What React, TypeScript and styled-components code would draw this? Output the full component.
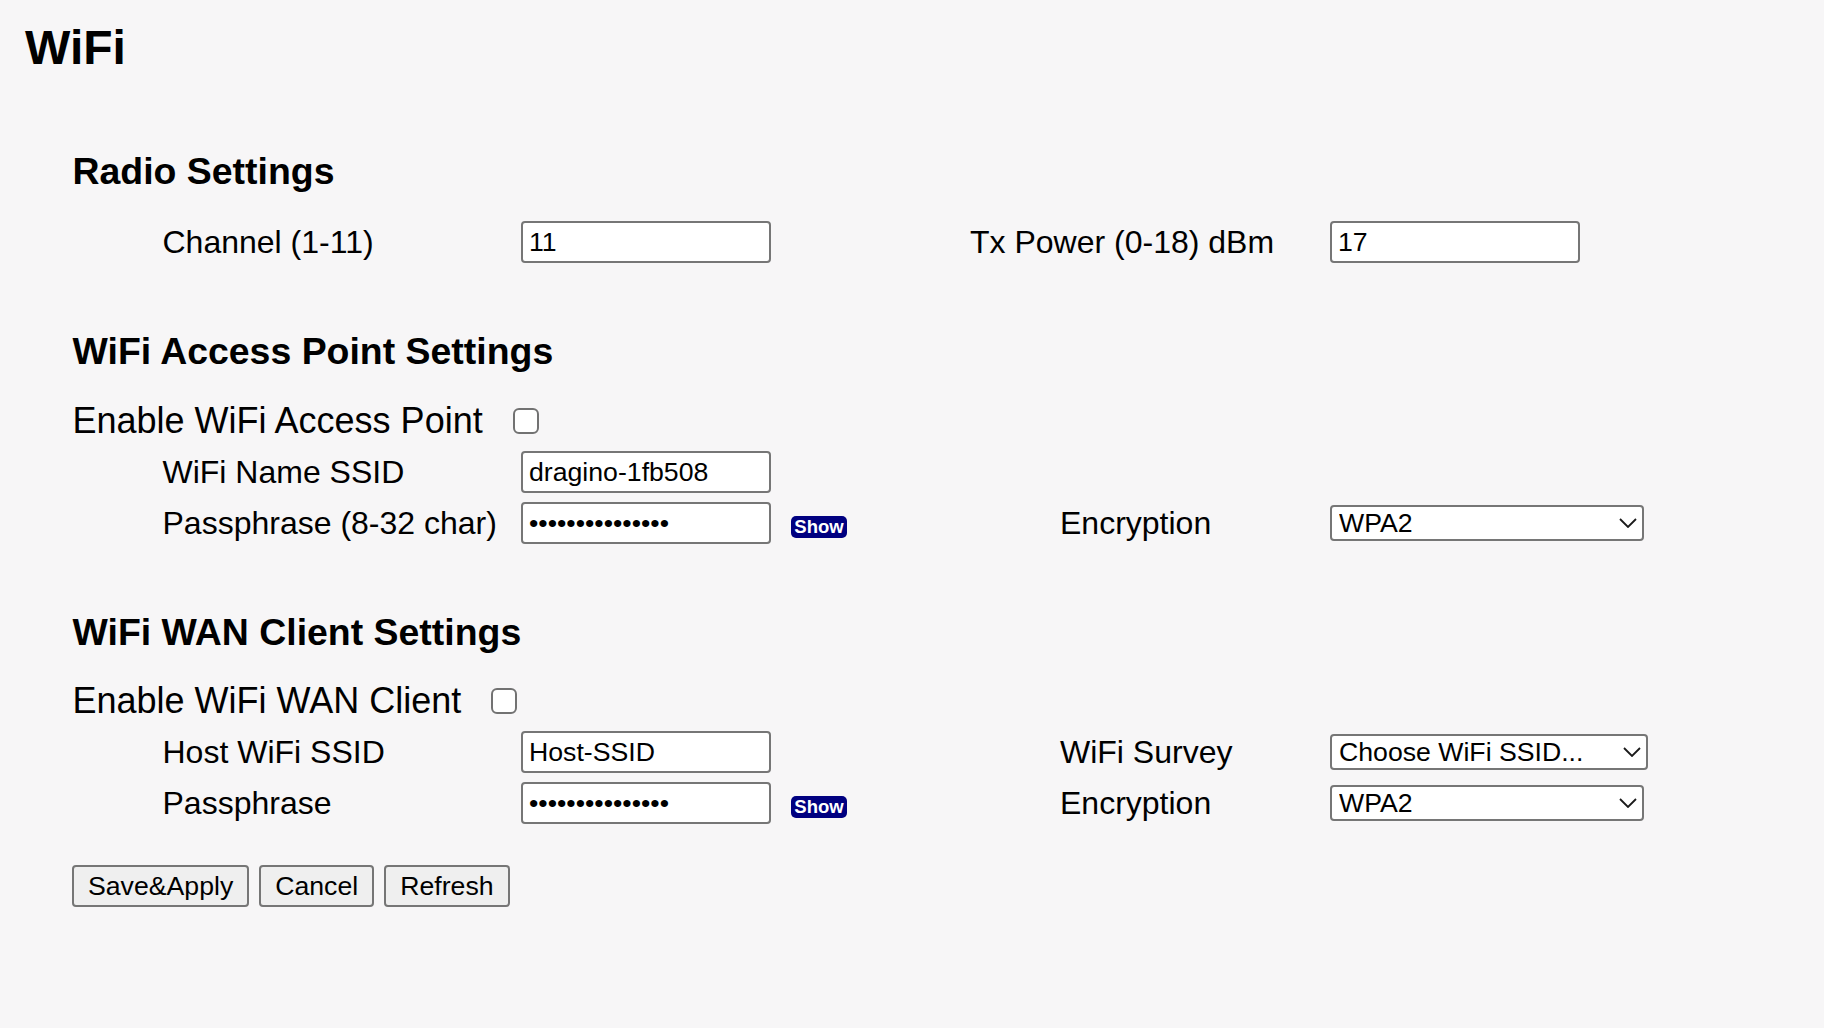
import React from "react";
import styled, { createGlobalStyle } from "styled-components";

const GlobalStyle = createGlobalStyle`
  html, body {
    margin: 0;
    padding: 0;
    background: #f7f6f7;
  }
  body {
    font-family: "Liberation Sans", Arial, Helvetica, sans-serif;
    color: #000;
  }
`;

const Page = styled.div`
  min-height: 1028px;
  box-sizing: border-box;
  padding: 20px 0 0 25px;
`;

const Title = styled.h2`
  margin: 0;
  font-size: 48px;
  line-height: 56px;
  font-weight: bold;
`;

const Section = styled.section<{ $top: number }>`
  margin-top: ${(p) => p.$top}px;
  padding-left: 47.5px;
`;

const SectionTitle = styled.h3`
  margin: 0;
  font-size: 37.44px;
  line-height: 44px;
  font-weight: bold;
`;

const Rows = styled.div<{ $top: number }>`
  display: flex;
  flex-direction: column;
  gap: 9px;
  margin-top: ${(p) => p.$top}px;
`;

const Row = styled.div<{ $cols: string }>`
  display: grid;
  grid-template-columns: ${(p) => p.$cols};
  align-items: center;
  height: 42px;
  padding-left: 90px;
`;

const EnableRow = styled.div`
  display: flex;
  align-items: center;
  height: 42px;
`;

const Label = styled.span<{ $big?: boolean }>`
  font-size: ${(p) => (p.$big ? 36 : 32)}px;
  line-height: 42px;
  white-space: nowrap;
`;

const Cell = styled.div`
  display: flex;
  align-items: center;
`;

const TextInput = styled.input`
  box-sizing: border-box;
  width: 250px;
  height: 42px;
  margin: 0;
  padding: 0 6px;
  border: 2px solid #767676;
  border-radius: 4px;
  background: #fff;
  color: #000;
  font-family: "Liberation Sans", Arial, sans-serif;
  font-size: 26.67px;
  outline: none;
`;

const Check = styled.input`
  appearance: none;
  box-sizing: border-box;
  width: 26px;
  height: 26px;
  margin: 0 0 0 30px;
  border: 2.5px solid #727272;
  border-radius: 6px;
  background: #fff;
`;

const ShowButton = styled.button`
  width: 56px;
  height: 22px;
  margin: 7px 0 0 20px;
  padding: 0;
  border: none;
  border-radius: 5px;
  background: #000080;
  color: #fff;
  font-family: "Liberation Sans", Arial, sans-serif;
  font-size: 18.5px;
  font-weight: bold;
  line-height: 22px;
`;

const SelectWrap = styled.div<{ $w: number }>`
  position: relative;
  width: ${(p) => p.$w}px;
  height: 36px;
`;

const Select = styled.select`
  appearance: none;
  box-sizing: border-box;
  width: 100%;
  height: 36px;
  margin: 0;
  padding: 0 40px 0 7px;
  border: 2px solid #767676;
  border-radius: 4px;
  background: #fff;
  color: #000;
  font-family: "Liberation Sans", Arial, sans-serif;
  font-size: 26.67px;
  outline: none;
`;

const Chevron = styled.svg`
  position: absolute;
  right: 7px;
  top: 50%;
  transform: translateY(-50%);
  pointer-events: none;
`;

const ButtonBar = styled.div`
  display: flex;
  gap: 10px;
  margin: 41px 0 0 -0.5px;
`;

const Button = styled.button`
  box-sizing: border-box;
  height: 42px;
  padding: 0 14px;
  border: 2px solid #767676;
  border-radius: 4px;
  background: #efefef;
  color: #000;
  font-family: "Liberation Sans", Arial, sans-serif;
  font-size: 26.67px;
`;

const Dropdown = ({ width, options }: { width: number; options: string[] }) => (
  <SelectWrap $w={width}>
    <Select defaultValue={options[0]}>
      {options.map((o) => (
        <option key={o}>{o}</option>
      ))}
    </Select>
    <Chevron width="18" height="10" viewBox="0 0 18 10">
      <path d="M1 1 L9 9 L17 1" fill="none" stroke="#1a1a1a" strokeWidth="1.8" />
    </Chevron>
  </SelectWrap>
);

const SUB_COLS = "358.5px 539px 270px auto";
const RADIO_COLS = "358.5px 449px 360px auto";
const PASS = "dragino-passkey";

export default function App() {
  return (
    <Page>
      <GlobalStyle />
      <Title>WiFi</Title>

      <Section $top={73}>
        <SectionTitle>Radio Settings</SectionTitle>
        <Rows $top={28}>
          <Row $cols={RADIO_COLS}>
            <Label>Channel (1-11)</Label>
            <TextInput defaultValue="11" />
            <Label>Tx Power (0-18) dBm</Label>
            <TextInput defaultValue="17" />
          </Row>
        </Rows>
      </Section>

      <Section $top={66}>
        <SectionTitle>WiFi Access Point Settings</SectionTitle>
        <Rows $top={27}>
          <EnableRow>
            <Label $big>Enable WiFi Access Point</Label>
            <Check type="checkbox" />
          </EnableRow>
          <Row $cols={SUB_COLS}>
            <Label>WiFi Name SSID</Label>
            <TextInput defaultValue="dragino-1fb508" />
          </Row>
          <Row $cols={SUB_COLS}>
            <Label>Passphrase (8-32 char)</Label>
            <Cell>
              <TextInput type="password" defaultValue={PASS} />
              <ShowButton>Show</ShowButton>
            </Cell>
            <Label>Encryption</Label>
            <Dropdown width={314} options={["WPA2", "WPA", "None"]} />
          </Row>
        </Rows>
      </Section>

      <Section $top={66}>
        <SectionTitle>WiFi WAN Client Settings</SectionTitle>
        <Rows $top={26}>
          <EnableRow>
            <Label $big>Enable WiFi WAN Client</Label>
            <Check type="checkbox" />
          </EnableRow>
          <Row $cols={SUB_COLS}>
            <Label>Host WiFi SSID</Label>
            <TextInput defaultValue="Host-SSID" />
            <Label>WiFi Survey</Label>
            <Dropdown width={318} options={["Choose WiFi SSID..."]} />
          </Row>
          <Row $cols={SUB_COLS}>
            <Label>Passphrase</Label>
            <Cell>
              <TextInput type="password" defaultValue={PASS} />
              <ShowButton>Show</ShowButton>
            </Cell>
            <Label>Encryption</Label>
            <Dropdown width={314} options={["WPA2", "WPA", "None"]} />
          </Row>
        </Rows>
        <ButtonBar>
          <Button>Save&amp;Apply</Button>
          <Button>Cancel</Button>
          <Button>Refresh</Button>
        </ButtonBar>
      </Section>
    </Page>
  );
}
